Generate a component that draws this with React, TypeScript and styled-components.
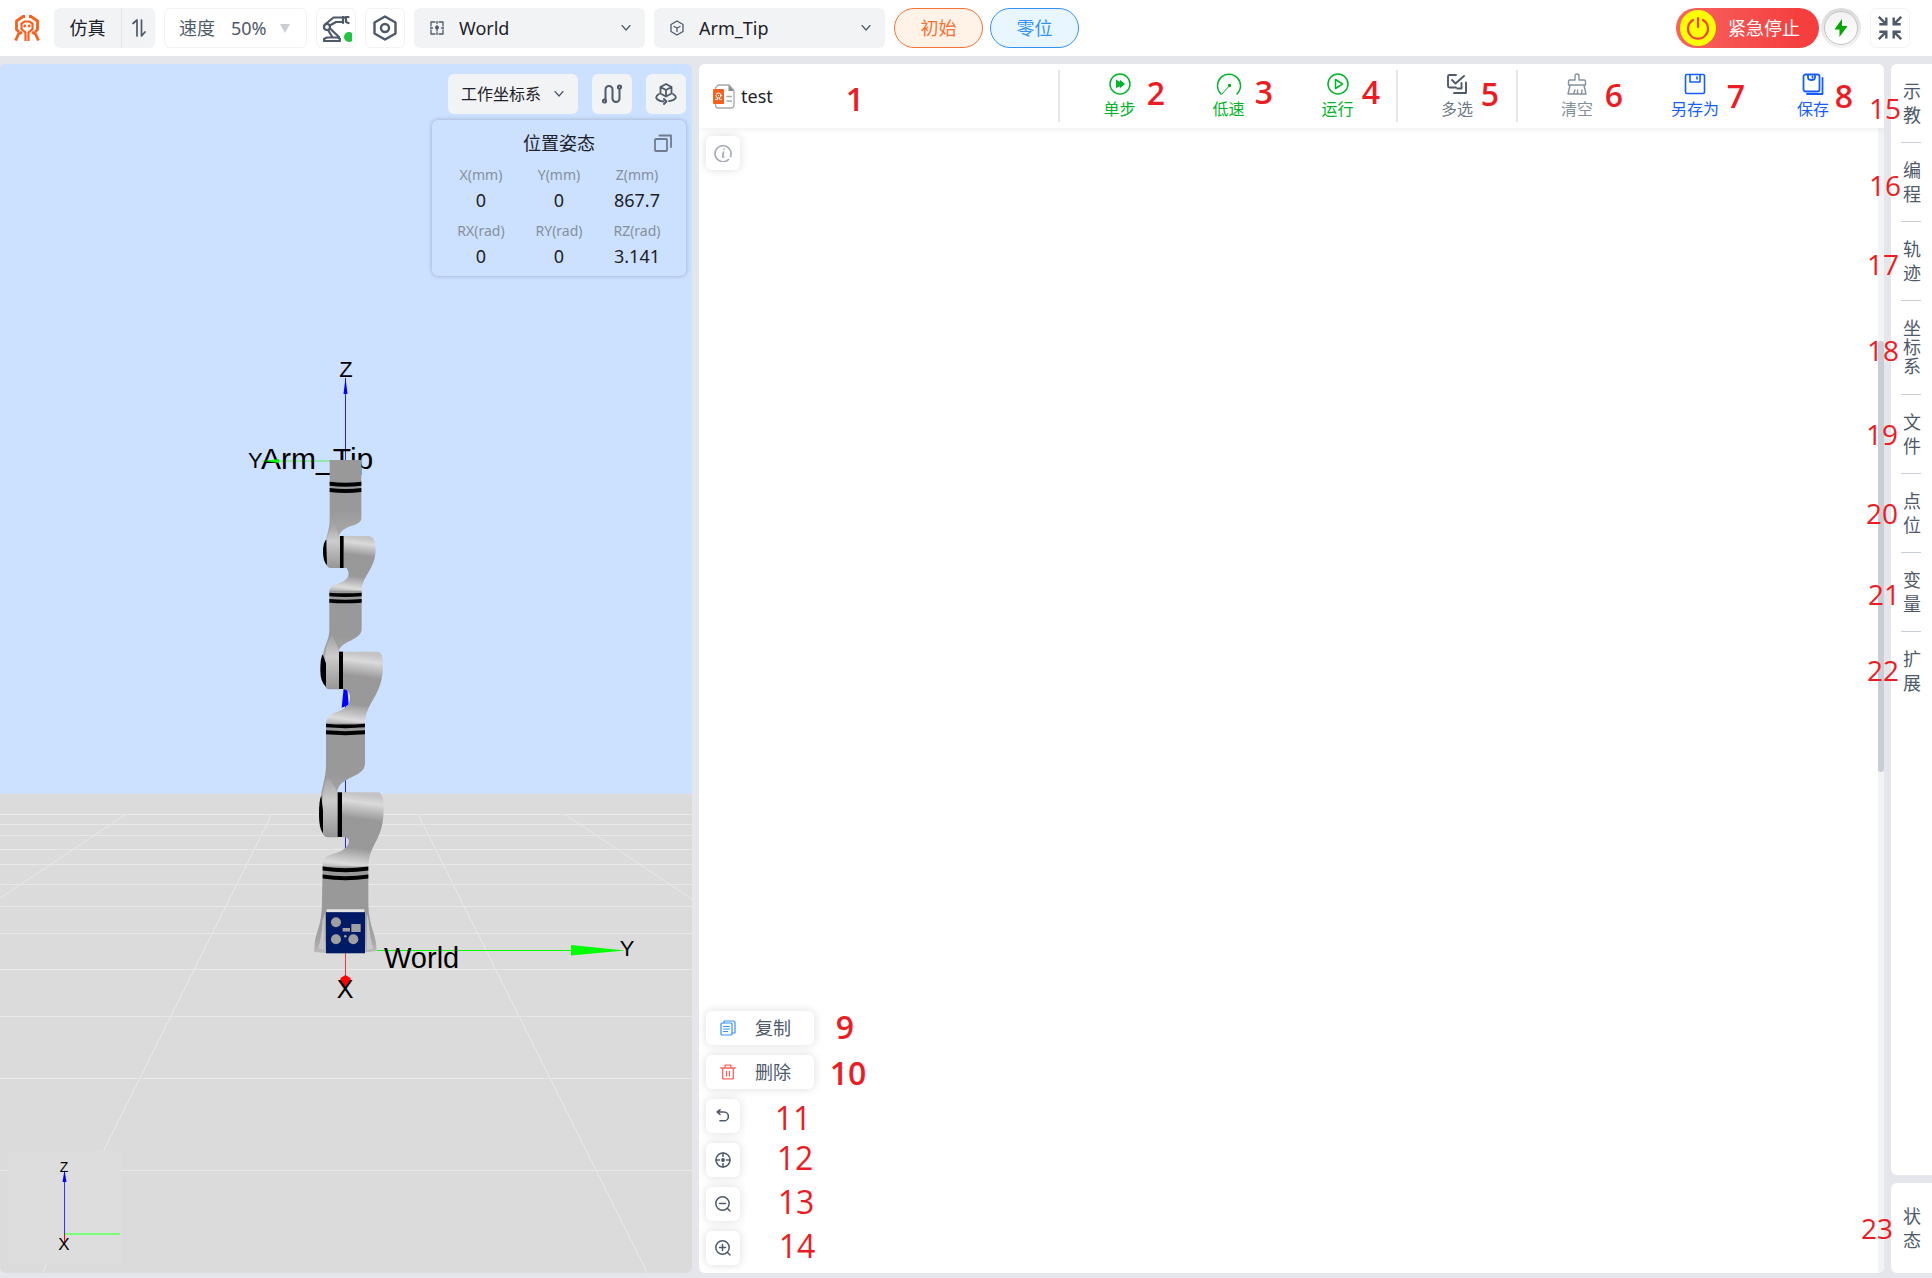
import React from "react";
import styled, { createGlobalStyle } from "styled-components";

const GlobalStyle = createGlobalStyle`
  *, *::before, *::after { box-sizing: border-box; }
  html, body { margin: 0; height: 100%; }
  body {
    background: #e5e6eb;
    color: #1d2129;
    font-family: "Noto Sans", "Noto Sans CJK SC", sans-serif;
    font-size: 18px;
    line-height: 24px;
  }
  button, select { font: inherit; color: inherit; }
  button { padding: 0; margin: 0; border: 0; background: none; cursor: pointer; }
  svg { display: block; flex: none; }
`;

const SLATE = "#4e5969";

/* ---------- page frame ---------- */

const Page = styled.div`
  position: relative;
  display: flex;
  flex-direction: column;
  min-height: 100vh;
`;

const Main = styled.main`
  flex: 1;
  display: grid;
  grid-template-columns: minmax(0, 692fr) minmax(0, 1185fr) 41px;
  gap: 7px;
  padding: 8px 0 5px;
`;

/* ---------- top bar ---------- */

const TopBar = styled.header`
  display: flex;
  align-items: center;
  gap: 9px;
  height: 56px;
  padding: 0 22px 0 14px;
  background: #fff;
`;

const LogoBox = styled.div`
  margin-right: 5px;
`;

const ModeGroup = styled.div`
  display: flex;
  height: 40px;
  border-radius: 6px;
  background: #f2f3f5;
`;

const ModeButton = styled.button`
  width: 67px;
`;

const SwapButton = styled.button`
  display: grid;
  place-items: center;
  width: 34px;
  border-left: 1px solid #e5e6eb;
  color: ${SLATE};
`;

const SpeedField = styled.label`
  display: flex;
  align-items: center;
  width: 143px;
  height: 40px;
  padding-left: 14px;
  border: 1px solid #f2f3f5;
  border-radius: 6px;
  color: ${SLATE};
  white-space: nowrap;
`;

const SpeedSelect = styled.select`
  appearance: none;
  width: 48px;
  margin-left: 16px;
  padding: 0;
  border: 0;
  background: none;
`;

const SquareButton = styled.button`
  display: grid;
  place-items: center;
  width: 40px;
  height: 40px;
  border: 1px solid #f2f3f5;
  border-radius: 6px;
  color: ${SLATE};
`;

const FrameField = styled.label`
  display: flex;
  align-items: center;
  gap: 15px;
  flex: 0 1 231px;
  height: 40px;
  padding: 0 14px 0 16px;
  border-radius: 6px;
  background: #f2f3f5;
  color: ${SLATE};
`;

const FrameSelect = styled.select`
  appearance: none;
  flex: 1;
  min-width: 0;
  padding: 0;
  border: 0;
  background: none;
  color: #1d2129;
`;

const PillGroup = styled.div`
  display: flex;
  gap: 7px;
`;

const Pill = styled.button<{ $tone: string; $fill: string }>`
  width: 89px;
  height: 40px;
  border: 1px solid ${(p) => p.$tone};
  border-radius: 20px;
  background: ${(p) => p.$fill};
  color: ${(p) => p.$tone};
`;

const StopGroup = styled.div`
  display: flex;
  align-items: center;
  gap: 2px;
  margin-left: auto;
`;

const StopButton = styled.button`
  display: flex;
  align-items: center;
  gap: 12px;
  width: 143px;
  height: 40px;
  padding-left: 4px;
  border-radius: 20px;
  background: linear-gradient(90deg, #f76560, #f53f3f 85%);
  color: #fff;
  white-space: nowrap;
`;

const PowerDisc = styled.span`
  display: grid;
  place-items: center;
  width: 36px;
  height: 36px;
  border-radius: 50%;
  background: #ff0;
`;

const BoltButton = styled.button`
  display: grid;
  place-items: center;
  width: 40px;
  height: 40px;
  border-radius: 50%;
  background: linear-gradient(#dadada, #f4f4f4);
`;

const BoltFace = styled.span`
  display: grid;
  place-items: center;
  width: 34px;
  height: 34px;
  border: 1px solid #c4c4c4;
  border-radius: 50%;
  background: linear-gradient(#f2f2f2, #fff);
`;

/* ---------- 3D view ---------- */

const View = styled.section`
  position: relative;
  display: flex;
  flex-direction: column;
  align-items: flex-end;
  gap: 6px;
  padding: 10px 6px;
  overflow: hidden;
  border-radius: 6px;
  background: #dbdbdb;
`;

const Scene = styled.svg`
  position: absolute;
  inset: 0;
  width: 100%;
  height: 100%;
  font-family: "Liberation Sans", Arial, sans-serif;
`;

const ViewTools = styled.div`
  position: relative;
  display: flex;
  gap: 14px;
`;

const CoordField = styled.label`
  display: flex;
  align-items: center;
  width: 130px;
  height: 40px;
  padding: 0 14px 0 13px;
  border-radius: 6px;
  background: #f2f3f5;
  color: ${SLATE};
`;

const CoordSelect = styled.select`
  appearance: none;
  flex: 1;
  min-width: 0;
  padding: 0;
  border: 0;
  background: none;
  color: #1d2129;
  font-size: 16px;
`;

const ViewButton = styled.button`
  display: grid;
  place-items: center;
  width: 40px;
  height: 40px;
  border-radius: 6px;
  background: #f2f3f5;
  color: ${SLATE};
`;

const PoseCard = styled.div`
  position: relative;
  width: 254px;
  height: 156px;
  padding: 11px 10px 0;
  border-radius: 6px;
  background: #cce0ff;
  box-shadow: 0 0 4px rgba(0, 0, 0, 0.25);
`;

const PoseHead = styled.div`
  display: grid;
  grid-template-columns: 1fr auto 1fr;
  align-items: center;
`;

const PoseTitle = styled.h2`
  grid-column: 2;
  margin: 0;
  font-size: 18px;
  font-weight: 400;
`;

const CopyPose = styled.button`
  justify-self: end;
  margin-right: 4px;
  color: #86909c;
`;

const PoseGrid = styled.dl`
  display: grid;
  grid-template-columns: repeat(3, 1fr);
  row-gap: 6px;
  margin: 8px 0 0;
  text-align: center;
`;

const PoseName = styled.dt`
  color: #86909c;
  font-size: 14px;
`;

const PoseValue = styled.dd`
  margin: 0;
  line-height: 26px;
`;

/* ---------- program editor ---------- */

const Editor = styled.section`
  display: flex;
  flex-direction: column;
  overflow: hidden;
  border-radius: 6px;
  background: #fff;
`;

const EditorBar = styled.div`
  position: relative;
  display: flex;
  align-items: center;
  height: 64px;
  padding: 0 12px 0 14px;
  box-shadow: 0 1px 6px rgba(0, 0, 0, 0.08);
`;

const FileName = styled.div`
  display: flex;
  align-items: center;
  gap: 6px;
  flex: 1;
`;

const Divider = styled.span`
  width: 2px;
  height: 52px;
  background: #e5e6eb;
`;

const RunGroup = styled.div`
  display: flex;
  padding: 0 4px 0 5px;
`;

const Tool = styled.button<{ $tone: string; $width: number }>`
  display: flex;
  flex-direction: column;
  align-items: center;
  gap: 4px;
  width: ${(p) => p.$width}px;
  padding-bottom: 1px;
  color: ${(p) => p.$tone};
  font-size: 16px;
  line-height: 20px;
`;

const EditorBody = styled.div`
  display: flex;
  flex: 1;
`;

const Canvas = styled.div`
  display: flex;
  flex: 1;
  flex-direction: column;
  align-items: flex-start;
  gap: 10px;
  padding: 8px 7px;
`;

const FloatButton = styled.button<{ $wide?: boolean }>`
  display: flex;
  align-items: center;
  justify-content: ${(p) => (p.$wide ? "flex-start" : "center")};
  gap: 19px;
  width: ${(p) => (p.$wide ? 108 : 34)}px;
  height: 34px;
  padding-left: ${(p) => (p.$wide ? 14 : 0)}px;
  border-radius: 6px;
  background: #fff;
  box-shadow: 0 0 10px rgba(0, 0, 0, 0.14);
  color: ${SLATE};
`;

const Spring = styled.div`
  flex: 1;
`;

const ScrollTrack = styled.div`
  display: flex;
  flex-direction: column;
  width: 6px;
  background: #f2f3f5;
`;

const ScrollPart = styled.div<{ $share: number; $thumb?: boolean }>`
  flex: ${(p) => p.$share};
  border-radius: 3px;
  background: ${(p) => (p.$thumb ? "#c9cdd4" : "none")};
`;

/* ---------- right-hand tabs ---------- */

const SideColumn = styled.aside`
  display: flex;
  flex-direction: column;
  gap: 8px;
`;

const SidePanel = styled.nav<{ $grow?: boolean }>`
  flex: ${(p) => (p.$grow ? "1" : "none")};
  padding: ${(p) => (p.$grow ? "0" : "6px 0")};
  border-radius: 6px 0 0 6px;
  background: #fff;
`;

const SideTab = styled.button<{ $compact?: boolean }>`
  display: block;
  width: 20px;
  margin-left: 10px;
  padding: ${(p) => (p.$compact ? 18 : 15)}px 0;
  padding-left: 2px;
  color: ${SLATE};
  line-height: ${(p) => (p.$compact ? 19 : 24)}px;
  text-align: left;
  word-break: break-all;

  & + & { border-top: 1px solid #c9cdd4; }
`;

/* ---------- numbered callouts ---------- */

const Callout = styled.span<{ $x: number; $y: number; $size: number; $bold: boolean }>`
  position: absolute;
  left: ${(p) => p.$x}px;
  top: ${(p) => p.$y}px;
  transform: translate(-50%, -50%);
  color: #ed1c24;
  font-family: "Open Sans", "Noto Sans", sans-serif;
  font-size: ${(p) => p.$size}px;
  font-weight: ${(p) => (p.$bold ? 600 : 400)};
  pointer-events: none;
`;

/* ---------- icons ---------- */

type IconProps = { w?: number; h?: number; box?: string; sw?: number; color?: string; children: React.ReactNode };

const Icon = ({ w = 22, h = w, box, sw = 2, color = "currentColor", children }: IconProps) => (
  <svg width={w} height={h} viewBox={box ?? `0 0 ${w} ${h}`} fill="none" stroke={color}
    strokeWidth={sw} strokeLinecap="round" strokeLinejoin="round" aria-hidden="true">
    {children}
  </svg>
);

const Chevron = () => <Icon w={10} h={6} sw={1.2}><path d="M1 .5l4 4.500 4-4.500" /></Icon>;

const Logo = () => (
  <Icon w={26} color="#f7601e" sw={2.8}>
    <g strokeLinecap="butt" strokeLinejoin="miter">
      <path d="M11 1.500H9L2.500 6v8.500L5 17M15 1.500h2L23.500 6v8.500L21 17" />
      <path d="M11.500 26V17.500L7.500 14V8.500L10.500 6.500h5L18.500 8.500V14l-4 3.500V26" strokeWidth="2.200" />
      <path d="M8 17L4.500 19 1.500 25.500M18 17l3.500 2L24.500 25.500" />
    </g>
    <path d="M10.800 11v.01M15.200 11v.01" strokeWidth="2.800" />
  </Icon>
);

const SwapIcon = () => (
  <Icon w={14} h={20} sw={1.7}><path d="M1 5.500L5 2v16M9.500 2v16l3.500-4" /></Icon>
);

const ArmIcon = () => (
  <Icon w={32} h={30} sw={2.2}>
    <path d="M4 28v-2l3-1.500h11l2 1.500M4 28h16" />
    <circle cx="7" cy="14" r="3" />
    <path d="M5 11.500L13.500 4.500H23M9.800 12.500L16 9h7M8 17l4 6.500M10 15.500l9 8.500" />
    <path d="M23 4v6M23 5l3-1h2.500M26 9l2.500 1M26 4v5" />
    <circle cx="29" cy="24" r="5" fill="#23c343" stroke="none" />
  </Icon>
);

const HexIcon = () => (
  <Icon w={26} sw={2.4}>
    <path d="M13 1.500l10.500 6v11l-10.500 6-10.500-6v-11z" /><circle cx="13" cy="13" r="4" />
  </Icon>
);

const WorldIcon = () => (
  <Icon w={14} sw={1.3}>
    <path d="M5 1H1v4M9 1h4v4M5 13H1V9M9 13h4V9M7 0v2.500M7 11.500V14M0 7h2.500M11.500 7H14M7 5v5" />
    <circle cx="7" cy="6.500" r="1.300" fill="currentColor" />
  </Icon>
);

const TipIcon = () => (
  <Icon w={14} h={16} sw={1.3}><path d="M7 1l6 3.500v7L7 15l-6-3.500v-7zM4 6.500l3 1.500 3-1.500M7 8v3.500" /></Icon>
);

const PowerIcon = () => (
  <Icon w={24} color="#f53f3f" sw={2.2}><path d="M7 4a10 10 0 1 0 10 0M12 2v9" /></Icon>
);

const BoltIcon = () => (
  <Icon w={14} h={18} color="none"><path d="M8 0v7h5.500L5.500 18v-7.500H.5z" fill="#00a800" /></Icon>
);

const ShrinkIcon = () => (
  <Icon w={24} sw={2.4}>
    <path strokeLinecap="butt" strokeLinejoin="miter" d="M.8.8l7 7M8.300 1.500v6.800h-7M23.200.8l-7 7M15.700 1.500v6.800h7M.8 23.200l7-7M8.300 22.500v-6.800h-7M23.200 23.200l-7-7M15.700 22.500v-6.800h7" />
  </Icon>
);

const TrackIcon = () => (
  <Icon w={20}>
    <circle cx="2.500" cy="17" r="1.600" /><circle cx="17.500" cy="3" r="1.600" />
    <path d="M3.500 15.500V5.500a3.500 3.500 0 0 1 7 0v9a3.500 3.500 0 0 0 7 0V5" />
  </Icon>
);

const OrbitIcon = () => (
  <Icon w={22} sw={1.8}>
    <path d="M11 1l5.500 3v6.500L11 13.500l-5.500-3V4zM5.500 4L11 7l5.500-3M11 7v6.500" />
    <path d="M4 11c-5 3-3 6.500 4.500 7.500M18 11c5 3 3 6-4 7.200M9 16l2.500 2.500L9 21" />
  </Icon>
);

const CopyIcon = () => (
  <Icon w={18} color="#6f7b8c" sw={1.8}><rect x="1" y="5" width="12" height="12" rx="1" /><path d="M5.500 1.500H17V13" /></Icon>
);

const FileIcon = () => (
  <Icon w={22} h={25} color="#a9a9a9" sw={1.3}>
    <path d="M2.500 5V4L5 1h11l5 5.500V21q0 3-3 3H5q-2.500 0-2.500-3v-1" />
    <path d="M15.500 1v6H21z" fill="#8c8c8c" stroke="none" />
    <path d="M14 12.500h4.500M14 17h4.500" />
    <rect x="0" y="5" width="11" height="15" rx="1" fill="#f7601e" stroke="none" />
    <g stroke="#fff" strokeWidth="1">
      <circle cx="5.500" cy="11.500" r="2.500" />
      <path d="M2.500 15.500h2v-1.500M8.500 15.500h-2v-1.500M5.500 11.500v.01" />
    </g>
  </Icon>
);

const StepIcon = () => (
  <Icon sw={1.5}><circle cx="11" cy="11" r="10" /><path d="M7.500 7.500v7l3.500-2v2l4.500-3.500L11 7.500v2z" fill="currentColor" strokeWidth="1" /></Icon>
);

const GaugeIcon = () => (
  <Icon w={26} h={22} sw={1.5}><path d="M5 21A11.500 11.500 0 1 1 21 21" /><path d="M6 21l8-9" strokeWidth="1" /><circle cx="13.500" cy="12.500" r="1" fill="currentColor" /></Icon>
);

const PlayIcon = () => (
  <Icon sw={1.5}><circle cx="11" cy="11" r="10" /><path d="M8.500 6.500l7 4.500-7 4.500z" /></Icon>
);

const MultiIcon = () => (
  <Icon sw={1.9} color={SLATE}><path d="M10 2H3.500Q2 2 2 3.500v9.500Q2 14.500 3.500 14.500H10M6 7l3.500 3.500L18 3M11.500 15.500h4v-5.500M8 20h12V9.500" /></Icon>
);

const BroomIcon = () => (
  <Icon sw={1.4}>
    <path d="M9 7V3q0-2 2-2t2 2v4h5q1.500 0 1.500 1.500V12h-17V8.500Q2.500 7 4 7zM4 12.500L2 21h18l-2-8.500M7.500 21l1.500-4M11.500 21v-4M15.500 21l.5-4" />
  </Icon>
);

const SaveAsIcon = () => (
  <Icon sw={1.6}><rect x="1.500" y="1.500" width="19" height="19" rx="1.500" /><path d="M6 2v7h10V2M13 4v2" /></Icon>
);

const SaveIcon = () => (
  <Icon sw={1.8}><rect x="1.500" y="1.500" width="16" height="17" rx="2" /><path d="M6 2v2.500Q6 7 9.500 7T13 4.500V2M10.500 3.500v1" /><path d="M20.500 5v16H5" /></Icon>
);

const InfoIcon = () => (
  <Icon w={18} color="#a3a9b5" sw={1.6}><path d="M14.500 15.500A8 8 0 1 1 16.500 12.500M9.500 8L8.500 13h1.500M10 5v.2" /></Icon>
);

const DuplicateIcon = () => (
  <Icon w={16} color="#3491fa" sw={1.2}>
    <rect x="1" y="3" width="11" height="12" rx="1" /><path d="M4 3V1h9q2 0 2 2v10h-3M3.500 6.500h6M3.500 9h6M3.500 11.500h4" />
  </Icon>
);

const TrashIcon = () => (
  <Icon w={16} color="#f76560" sw={1.3}><path d="M.7 4h14.600M5 3.500V1.200h6v2.300M2.700 4.500v10.300h10.600V4.500M6.500 7.500v4.500M9.500 7.500v4.500" /></Icon>
);

const UndoIcon = () => <Icon w={14} sw={1.6}><path d="M4 .8L1.200 3 4 5.500M1.500 3H8a4.400 4.400 0 0 1 0 8.800H4" /></Icon>;

const TargetIcon = () => (
  <Icon w={16} sw={1.5}><circle cx="8" cy="8" r="7" /><path d="M8 1v3.500M8 11.500V15M1 8h3.500M11.500 8H15" /><circle cx="8" cy="8" r="1.200" fill="currentColor" /></Icon>
);

const ZoomIcon = ({ plus }: { plus?: boolean }) => (
  <Icon w={16} sw={1.5}><circle cx="7.500" cy="7.500" r="6.700" /><path d={`M12.500 12.500L15 15M4.500 7.500h6${plus ? "M7.500 4.500v6" : ""}`} /></Icon>
);

/* ---------- robot scene ---------- */

const floorRows = [814, 824, 835, 849, 864, 884, 906, 933, 969, 1016, 1078, 1170];
const floorRays = [-365, -219, -73, 73, 219, 365];

const Robot = () => (
  <g transform="translate(230 340) scale(0.3333)">
    <path d="M299 360h95v176q0 10-20 19c-30 8-48 20-50 45l-6 10h-30c2-30 11-40 11-75z" fill="url(#tube)" />
    <path d="M299 425q48 6 95 0v12q-47 6-95 0zM299 444q48 6 95 0v12q-47 6-95 0z" />
    <path d="M291 600q10-40 22-50l12 35 8 4v95h-30q-12 0-14-12z" fill="url(#cap)" />
    <path d="M289 598q-10 10-10 38t12 40z" />
    <path d="M341 588h74q20 0 22 40c0 60-42 80-42 126h-97q0-16 28-24c30-10 36-26 24-46h-9z" fill="url(#joint)" />
    <path d="M330 588h11v96h-11z" />

    <path d="M298 752h97v114c0 36-62 34-70 70l-10 40-37-20c3-44 20-50 20-90z" fill="url(#tube)" />
    <path d="M298 758q48 4 97 0v11q-49 4-97 0zM298 777q48 4 97 0v11q-49 4-97 0z" />

    <path d="M341 1045h11l4 50-21 8z" fill="#00f" />
    <path d="M286 1040V945q4-40 20-60l18 40 5 10v113h-28q-12 0-15-8z" fill="url(#cap)" />
    <path d="M278 943q-7 10-7 47t17 50v-70z" />
    <path d="M339 935h104q16 0 16 40c0 95-54 110-54 178H288q0-26 30-36c32-14 44-22 42-50q-4-18-21-20z" fill="url(#joint)" />
    <path d="M327 935h12v112h-12z" />

    <path d="M288 1150h117v120c0 46-80 36-84 90l-10 50-38-30c0-40 15-56 15-110z" fill="url(#tube)" />
    <path d="M288 1151q58 5 117 0v11q-59 5-117 0zM288 1171q58 5 117 0v12q-59 5-117 0z" />

    <path d="M278 1480V1370q6-50 16-60l26 40 5 7v135h-30q-13 0-17-12z" fill="url(#cap)" />
    <path d="M274 1367q-7 15-7 57t12 57v-70z" />
    <path d="M336 1357h108q17 0 17 50c0 100-46 100-46 180H278v-15c0-30 36-25 62-43q24-18 14-34l-18-4z" fill="url(#joint)" />
    <path d="M323 1357h13v134h-13z" />

    <path d="M278 1580h137v100c0 90 24 90 25 153q-90 14-187 3c0-70 23-60 23-156z" fill="url(#tube)" />
    <path d="M278 1740q-4 60-14 86l20 4v-110zM416 1740q4 60 14 86l-20 4v-110z" fill="#c8c8c8" />
    <path d="M278 1580q68 10 137 0v12q-69 10-137 0zM278 1604q68 10 137 0v12q-69 10-137 0z" />
    <path d="M290 1708h113v8H290z" fill="#e4e4e4" />
    <path d="M288 1717h117v123H288z" fill="#001a66" />
    <g fill="#a0a0a0">
      <circle cx="318" cy="1747" r="15" /><circle cx="318" cy="1798" r="15" />
      <circle cx="370" cy="1798" r="15" /><circle cx="346" cy="1789" r="4" />
      <path d="M338 1764h22v11h-22zM364 1752h28v24h-28z" />
    </g>
  </g>
);

const RobotScene = () => (
  <Scene viewBox="0 64 692 1209" preserveAspectRatio="xMidYMax slice" role="img" aria-label="robot arm">
    <defs>
      <linearGradient id="tube" x1="0" y1="0" x2="0" y2="1">
        <stop offset="0" stopColor="#999" /><stop offset="0.6" stopColor="#999" />
        <stop offset="0.85" stopColor="#a6a6a6" /><stop offset="1" stopColor="#bbb" />
      </linearGradient>
      <linearGradient id="joint" x1="0.35" y1="0" x2="0.25" y2="1">
        <stop offset="0" stopColor="#c4c4c4" /><stop offset="0.1" stopColor="#dadada" />
        <stop offset="0.32" stopColor="#989898" /><stop offset="0.7" stopColor="#999" />
        <stop offset="0.92" stopColor="#dcdcdc" /><stop offset="1" stopColor="#b4b4b4" />
      </linearGradient>
      <linearGradient id="cap" x1="0" y1="0" x2="0" y2="1">
        <stop offset="0" stopColor="#a0a0a0" /><stop offset="0.4" stopColor="#ccc" />
        <stop offset="1" stopColor="#969696" />
      </linearGradient>
    </defs>
    <path d="M0 0h692v794H0z" fill="#cce0ff" />
    <g stroke="#e8e8e8" strokeWidth="1">
      {floorRows.map((y) => <path key={y} d={`M0 ${y + 0.5}H692`} />)}
      {floorRays.map((d) => <path key={d} d={`M${345 + d} 814L${345 + (d * 605) / 146} 1273`} />)}
    </g>
    <path d="M345.500 378V461M345.500 700V860" stroke="#22f" />
    <path d="M345.500 378l2 16h-4z" fill="#00f" />
    <path d="M262 461h70" stroke="#7aef8c" strokeWidth="1.500" />
    <path d="M377 950.500h195" stroke="#0f0" />
    <path d="M571 945l54 5.500-54 5z" fill="#0f0" />
    <path d="M345.500 952v30" stroke="#f33" />
    <path d="M345.500 975l5 3v5l-5 5-5-5v-5z" fill="#f00" />
    <text x="248" y="468" fontSize="22">Y</text>
    <text x="261" y="469" fontSize="30">Arm_Tip</text>
    <path d="M264 461l15-2v4z" fill="#0f0" />
    <Robot />
    <g fontSize="22" textAnchor="middle">
      <text x="346" y="377">Z</text>
      <text x="627" y="956">Y</text>
      <text x="345" y="998" fontSize="25">X</text>
    </g>
    <text x="384" y="968" fontSize="29">World</text>

    <path d="M8 1151h113v113H8z" fill="#ddd" />
    <path d="M64 1234h56" stroke="#7f7" strokeWidth="2" />
    <path d="M64.500 1172v62" stroke="#33f" /><path d="M64.500 1170l2 12h-4z" fill="#00f" />
    <path d="M64.500 1234v10" stroke="#f00" />
    <g textAnchor="middle">
      <text x="64" y="1172" fontSize="14">Z</text>
      <text x="64" y="1250" fontSize="17">X</text>
    </g>
  </Scene>
);

/* ---------- data ---------- */

const pose = [
  ["X(mm)", "0"], ["Y(mm)", "0"], ["Z(mm)", "867.7"],
  ["RX(rad)", "0"], ["RY(rad)", "0"], ["RZ(rad)", "3.141"],
];

const GREEN = "#00b42a";
const BLUE = "#165dff";

const tabs = ["示教", "编程", "轨迹", "坐标系", "文件", "点位", "变量", "扩展"];

/* centre of each callout on the page */
const callouts: [number, number][] = [
  [855, 99], [1156, 93], [1264, 92], [1371, 92], [1490, 94], [1614, 95], [1736, 96], [1844, 96],
  [845, 1027], [848, 1073], [793, 1118], [795, 1158], [796, 1202], [797, 1246],
  [1885, 108], [1885, 185], [1883, 264], [1883, 350], [1882, 434], [1882, 513], [1884, 594], [1883, 670], [1877, 1228],
];

const calloutSize = (n: number) => (n < 15 ? 32 : 28);

export default function App() {
  return (
    <Page lang="zh-CN">
      <GlobalStyle />
      <TopBar>
        <LogoBox><Logo /></LogoBox>
        <ModeGroup>
          <ModeButton>仿真</ModeButton>
          <SwapButton aria-label="切换"><SwapIcon /></SwapButton>
        </ModeGroup>
        <SpeedField>
          速度
          <SpeedSelect defaultValue="50%"><option>50%</option></SpeedSelect>
          <Icon w={12} h={10} color="none"><path d="M1 1h10L6 10z" fill="#c9cdd4" /></Icon>
        </SpeedField>
        <SquareButton aria-label="机械臂"><ArmIcon /></SquareButton>
        <SquareButton aria-label="设置"><HexIcon /></SquareButton>
        <FrameField>
          <WorldIcon />
          <FrameSelect aria-label="基坐标系"><option>World</option></FrameSelect>
          <Chevron />
        </FrameField>
        <FrameField>
          <TipIcon />
          <FrameSelect aria-label="工具坐标系"><option>Arm_Tip</option></FrameSelect>
          <Chevron />
        </FrameField>
        <PillGroup>
          <Pill $tone="#f77234" $fill="#fff3e8">初始</Pill>
          <Pill $tone="#3491fa" $fill="#e8f7ff">零位</Pill>
        </PillGroup>
        <StopGroup>
          <StopButton><PowerDisc><PowerIcon /></PowerDisc>紧急停止</StopButton>
          <BoltButton aria-label="电源"><BoltFace><BoltIcon /></BoltFace></BoltButton>
        </StopGroup>
        <SquareButton aria-label="退出全屏"><ShrinkIcon /></SquareButton>
      </TopBar>

      <Main>
        <View>
          <RobotScene />
          <ViewTools>
            <CoordField>
              <CoordSelect aria-label="坐标系"><option>工作坐标系</option></CoordSelect>
              <Chevron />
            </CoordField>
            <ViewButton aria-label="轨迹"><TrackIcon /></ViewButton>
            <ViewButton aria-label="视角"><OrbitIcon /></ViewButton>
          </ViewTools>
          <PoseCard>
            <PoseHead>
              <PoseTitle>位置姿态</PoseTitle>
              <CopyPose aria-label="复制位姿"><CopyIcon /></CopyPose>
            </PoseHead>
            <PoseGrid>
              {pose.map(([name, value]) => (
                <div key={name}>
                  <PoseName>{name}</PoseName>
                  <PoseValue>{value}</PoseValue>
                </div>
              ))}
            </PoseGrid>
          </PoseCard>
        </View>

        <Editor>
          <EditorBar>
            <FileName><FileIcon />test</FileName>
            <Divider />
            <RunGroup>
              <Tool $tone={GREEN} $width={109}><StepIcon />单步</Tool>
              <Tool $tone={GREEN} $width={109}><GaugeIcon />低速</Tool>
              <Tool $tone={GREEN} $width={109}><PlayIcon />运行</Tool>
            </RunGroup>
            <Divider />
            <Tool $tone="#6b7785" $width={118}><MultiIcon />多选</Tool>
            <Divider />
            <Tool $tone="#86909c" $width={118}><BroomIcon />清空</Tool>
            <Tool $tone={BLUE} $width={118}><SaveAsIcon />另存为</Tool>
            <Tool $tone={BLUE} $width={118}><SaveIcon />保存</Tool>
          </EditorBar>
          <EditorBody>
            <Canvas>
              <FloatButton aria-label="说明"><InfoIcon /></FloatButton>
              <Spring />
              <FloatButton $wide><DuplicateIcon />复制</FloatButton>
              <FloatButton $wide><TrashIcon />删除</FloatButton>
              <FloatButton aria-label="撤销"><UndoIcon /></FloatButton>
              <FloatButton aria-label="居中"><TargetIcon /></FloatButton>
              <FloatButton aria-label="缩小"><ZoomIcon /></FloatButton>
              <FloatButton aria-label="放大"><ZoomIcon plus /></FloatButton>
            </Canvas>
            <ScrollTrack>
              <ScrollPart $share={213} />
              <ScrollPart $share={431} $thumb />
              <ScrollPart $share={501} />
            </ScrollTrack>
          </EditorBody>
        </Editor>

        <SideColumn>
          <SidePanel $grow>
            {tabs.map((t) => <SideTab key={t} $compact={t.length > 2}>{t}</SideTab>)}
          </SidePanel>
          <SidePanel>
            <SideTab>状态</SideTab>
          </SidePanel>
        </SideColumn>
      </Main>

      {callouts.map(([x, y], i) => (
        <Callout key={i} $x={x} $y={y} $size={calloutSize(i + 1)} $bold={i < 10}>{i + 1}</Callout>
      ))}
    </Page>
  );
}
